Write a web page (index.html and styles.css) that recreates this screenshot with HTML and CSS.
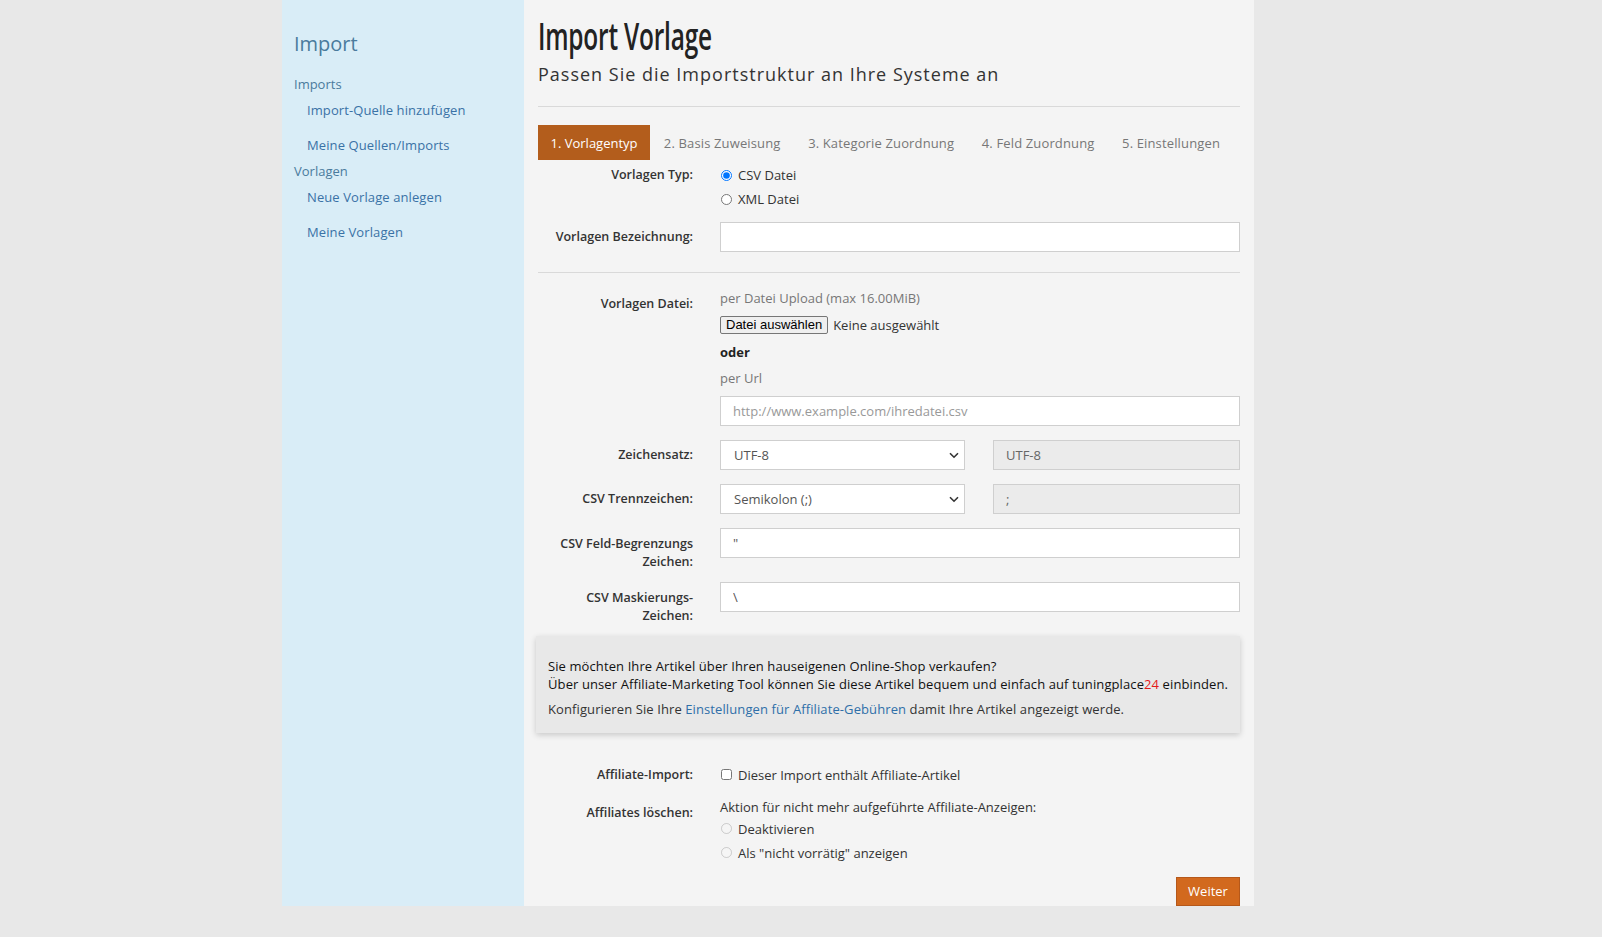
FILE: index.html
```html
<!DOCTYPE html>
<html lang="de">
<head>
<meta charset="utf-8">
<title>Import Vorlage</title>
<link rel="stylesheet" href="styles.css">
</head>
<body>
<div class="page">
  <aside class="sidebar">
    <div class="side-title">Import</div>
    <div class="side-group">Imports</div>
    <ul class="side-list">
      <li><a href="#">Import-Quelle hinzufügen</a></li>
      <li><a href="#">Meine Quellen/Imports</a></li>
    </ul>
    <div class="side-group">Vorlagen</div>
    <ul class="side-list">
      <li><a href="#">Neue Vorlage anlegen</a></li>
      <li><a href="#">Meine Vorlagen</a></li>
    </ul>
  </aside>
  <main class="main">
    <h1 class="title"><span class="title-text">Import Vorlage</span></h1>
    <p class="subtitle">Passen Sie die Importstruktur an Ihre Systeme an</p>
    <hr class="rule rule-top">
    <nav class="tabs">
      <span class="tab active">1. Vorlagentyp</span>
      <span class="tab">2. Basis Zuweisung</span>
      <span class="tab">3. Kategorie Zuordnung</span>
      <span class="tab">4. Feld Zuordnung</span>
      <span class="tab">5. Einstellungen</span>
    </nav>

    <div class="row row-typ">
      <label class="lbl lbl-24">Vorlagen Typ:</label>
      <div class="field">
        <label class="opt"><input type="radio" name="typ" checked> CSV Datei</label>
        <label class="opt"><input type="radio" name="typ"> XML Datei</label>
      </div>
    </div>

    <div class="row row-bez">
      <label class="lbl lbl-30">Vorlagen Bezeichnung:</label>
      <div class="field"><input class="inp" type="text"></div>
    </div>

    <hr class="rule rule-mid">

    <div class="row row-datei">
      <label class="lbl lbl-datei">Vorlagen Datei:</label>
      <div class="field">
        <div class="muted line20">per Datei Upload (max 16.00MiB)</div>
        <div class="file-row line20"><span class="file-btn">Datei auswählen</span><span class="file-none">Keine ausgewählt</span></div>
        <div class="oder line20">oder</div>
        <div class="muted line20 per-url">per Url</div>
        <input class="inp url" type="text" placeholder="http://www.example.com/ihredatei.csv">
      </div>
    </div>

    <div class="row row-sel">
      <label class="lbl lbl-30">Zeichensatz:</label>
      <div class="field split">
        <span class="sel"><span class="sel-text">UTF-8</span><svg class="chev" width="10" height="7" viewBox="0 0 10 7"><path d="M1 1.2 5 5.2 9 1.2" fill="none" stroke="#333" stroke-width="1.6"/></svg></span>
        <span class="ro">UTF-8</span>
      </div>
    </div>

    <div class="row row-sel">
      <label class="lbl lbl-30">CSV Trennzeichen:</label>
      <div class="field split">
        <span class="sel"><span class="sel-text">Semikolon (;)</span><svg class="chev" width="10" height="7" viewBox="0 0 10 7"><path d="M1 1.2 5 5.2 9 1.2" fill="none" stroke="#333" stroke-width="1.6"/></svg></span>
        <span class="ro">;</span>
      </div>
    </div>

    <div class="row row-sel">
      <label class="lbl lbl-two">CSV Feld-Begrenzungs Zeichen:</label>
      <div class="field"><input class="inp" type="text" value="&quot;"></div>
    </div>

    <div class="row row-mask">
      <label class="lbl lbl-two">CSV Maskierungs-<br>Zeichen:</label>
      <div class="field"><input class="inp" type="text" value="\"></div>
    </div>

    <div class="info">
      <p class="info-strong">Sie möchten Ihre Artikel über Ihren hauseigenen Online-Shop verkaufen?<br>Über unser Affiliate-Marketing Tool können Sie diese Artikel bequem und einfach auf tuningplace<span class="red">24</span> einbinden.</p>
      <p class="info-text">Konfigurieren Sie Ihre <a href="#">Einstellungen für Affiliate-Gebühren</a> damit Ihre Artikel angezeigt werde.</p>
    </div>

    <div class="row row-aff">
      <label class="lbl lbl-24">Affiliate-Import:</label>
      <div class="field"><label class="opt"><input type="checkbox"> Dieser Import enthält Affiliate-Artikel</label></div>
    </div>

    <div class="row row-del">
      <label class="lbl lbl-del">Affiliates löschen:</label>
      <div class="field">
        <div class="line20">Aktion für nicht mehr aufgeführte Affiliate-Anzeigen:</div>
        <label class="opt opt-dis"><input type="radio" name="del" disabled> Deaktivieren</label>
        <label class="opt opt-dis"><input type="radio" name="del" disabled> Als "nicht vorrätig" anzeigen</label>
      </div>
    </div>

    <div class="actions"><button class="btn" type="button">Weiter</button></div>
  </main>
</div>
</body>
</html>
```

FILE: styles.css
```css
html, body {
  margin: 0;
  padding: 0;
  background: #e8e8e8;
}
body {
  font-family: "Open Sans", "Noto Sans", sans-serif;
  font-size: 13px;
  color: #333;
}
.page {
  display: flex;
  width: 972px;
  margin-left: 282px;
  align-items: stretch;
}
.sidebar {
  width: 242px;
  flex: 0 0 242px;
  background: #d9edf7;
  padding: 30px 12px 0 12px;
  box-sizing: border-box;
}
.side-title {
  font-size: 20px;
  line-height: 28px;
  color: #4a7b9d;
  margin-bottom: 16px;
}
.side-group {
  font-size: 13px;
  line-height: 20px;
  color: #4a7b9d;
  margin-top: 6px;
}
.side-title + .side-group { margin-top: 0; }
.side-list {
  list-style: none;
  margin: 0;
  padding: 0 0 0 13px;
}
.side-list li {
  line-height: 20px;
  margin-top: 15px;
}
.side-list li:first-child { margin-top: 6px; }
.side-list a {
  color: #3a72a6;
  text-decoration: none;
  font-size: 13px;
  letter-spacing: 0.1px;
}
.main {
  flex: 0 0 730px;
  width: 730px;
  min-width: 0;
  overflow: hidden;
  background: #f4f4f4;
  padding: 13px 14px 0 14px;
  box-sizing: border-box;
}
.title {
  margin: 0;
  font-family: "Open Sans", "Noto Sans", sans-serif;
  font-weight: 600;
  font-size: 37px;
  line-height: 46px;
  color: #222;
  white-space: nowrap;
}
.title-text {
  display: inline-block;
  transform: scaleX(0.66);
  transform-origin: 0 50%;
  letter-spacing: -0.3px;
}
.subtitle {
  margin: 3px 0 0 0;
  font-size: 18px;
  line-height: 24px;
  color: #333;
  letter-spacing: 1px;
}
.rule {
  border: 0;
  border-top: 1px solid #d9d9d9;
  margin: 0;
}
.rule-top { margin-top: 20px; }
.tabs {
  display: flex;
  margin-top: 18px;
  height: 35px;
}
.tab {
  display: flex;
  align-items: center;
  padding: 0 13.8px;
  color: #777;
  font-size: 13px;
  white-space: nowrap;
  letter-spacing: 0.14px;
}
.tab.active {
  background: #b35d1c;
  color: #fff;
  padding: 0 12.5px;
  letter-spacing: 0;
}
.row {
  display: grid;
  grid-template-columns: 155px 520px;
  column-gap: 27px;
  align-items: start;
}
.lbl {
  text-align: right;
  font-weight: 600;
  color: #333;
  font-size: 12.5px;
}
.lbl-24 { line-height: 24px; }
.lbl-30 { line-height: 30px; }
.lbl-two { line-height: 17.5px; padding-top: 7px; }
.lbl-datei { line-height: 20px; padding-top: 6px; }
.lbl-del { line-height: 20px; padding-top: 6px; }
.line20 { line-height: 20px; }
.field { min-width: 0; }
.opt {
  display: flex;
  align-items: center;
  line-height: 24px;
  color: #333;
}
.opt input {
  margin: 0 6px 0 1px;
  width: 11px;
  height: 11px;
}
.row-typ { margin-top: 3px; }
.row-bez { margin-top: 11px; }
.inp {
  display: block;
  box-sizing: border-box;
  width: 100%;
  height: 30px;
  border: 1px solid #cfcfcf;
  background: #fff;
  padding: 0 12px;
  font-family: "Open Sans", "Noto Sans", sans-serif;
  font-size: 13px;
  color: #555;
  outline: none;
  margin: 0;
}
.inp::placeholder { color: #999; }
.rule-mid { margin-top: 20px; margin-bottom: 15px; }
.muted { color: #777; }
.file-row {
  display: flex;
  align-items: center;
  margin-top: 7px;
}
.file-btn {
  font-family: "Liberation Sans", Arial, sans-serif;
  font-size: 13px;
  line-height: 16px;
  color: #000;
  background: #efefef;
  border: 1px solid #767676;
  border-radius: 2px;
  padding: 0 5px;
}
.file-none { margin-left: 5px; color: #333; }
.oder { font-weight: 700; color: #222; margin-top: 7px; }
.per-url { margin-top: 6px; }
.url { margin-top: 8px; }
.row-sel { margin-top: 14px; }
.row-mask { margin-top: 12px; }
.split {
  display: flex;
  justify-content: space-between;
}
.sel {
  position: relative;
  box-sizing: border-box;
  width: 245px;
  height: 30px;
  border: 1px solid #cfcfcf;
  background: #fff;
  display: flex;
  align-items: center;
  padding-left: 13px;
  color: #555;
}
.chev {
  position: absolute;
  right: 5px;
  top: 11px;
}
.ro {
  box-sizing: border-box;
  width: 247px;
  height: 30px;
  border: 1px solid #cfcfcf;
  background: #ebebeb;
  display: flex;
  align-items: center;
  padding-left: 12px;
  color: #666;
}
.info {
  margin: 12px 0 0 -2px;
  background: #e8e8e8;
  box-shadow: 0 2px 6px rgba(0,0,0,0.18);
  padding: 22px 12px 14px 12px;
}
.info p { margin: 0; line-height: 17.5px; letter-spacing: 0.1px; }
.info-strong { font-weight: 500; color: #111; }
.info-text { margin-top: 8px !important; color: #333; }
.info a { color: #2f6fa8; text-decoration: none; }
.red { color: #e41b1b; }
.row-aff { margin-top: 30px; }
.row-del { margin-top: 10px; }
.row-del .opt { line-height: 24px; }
.actions {
  display: flex;
  justify-content: flex-end;
  margin-top: 12px;
}
.btn {
  box-sizing: border-box;
  width: 64px;
  height: 29px;
  background: #d2691e;
  border: 1px solid #b5581a;
  color: #fff;
  font-family: "Open Sans", "Noto Sans", sans-serif;
  font-size: 13px;
  padding: 0;
  margin: 0;
  display: block;
}
```
